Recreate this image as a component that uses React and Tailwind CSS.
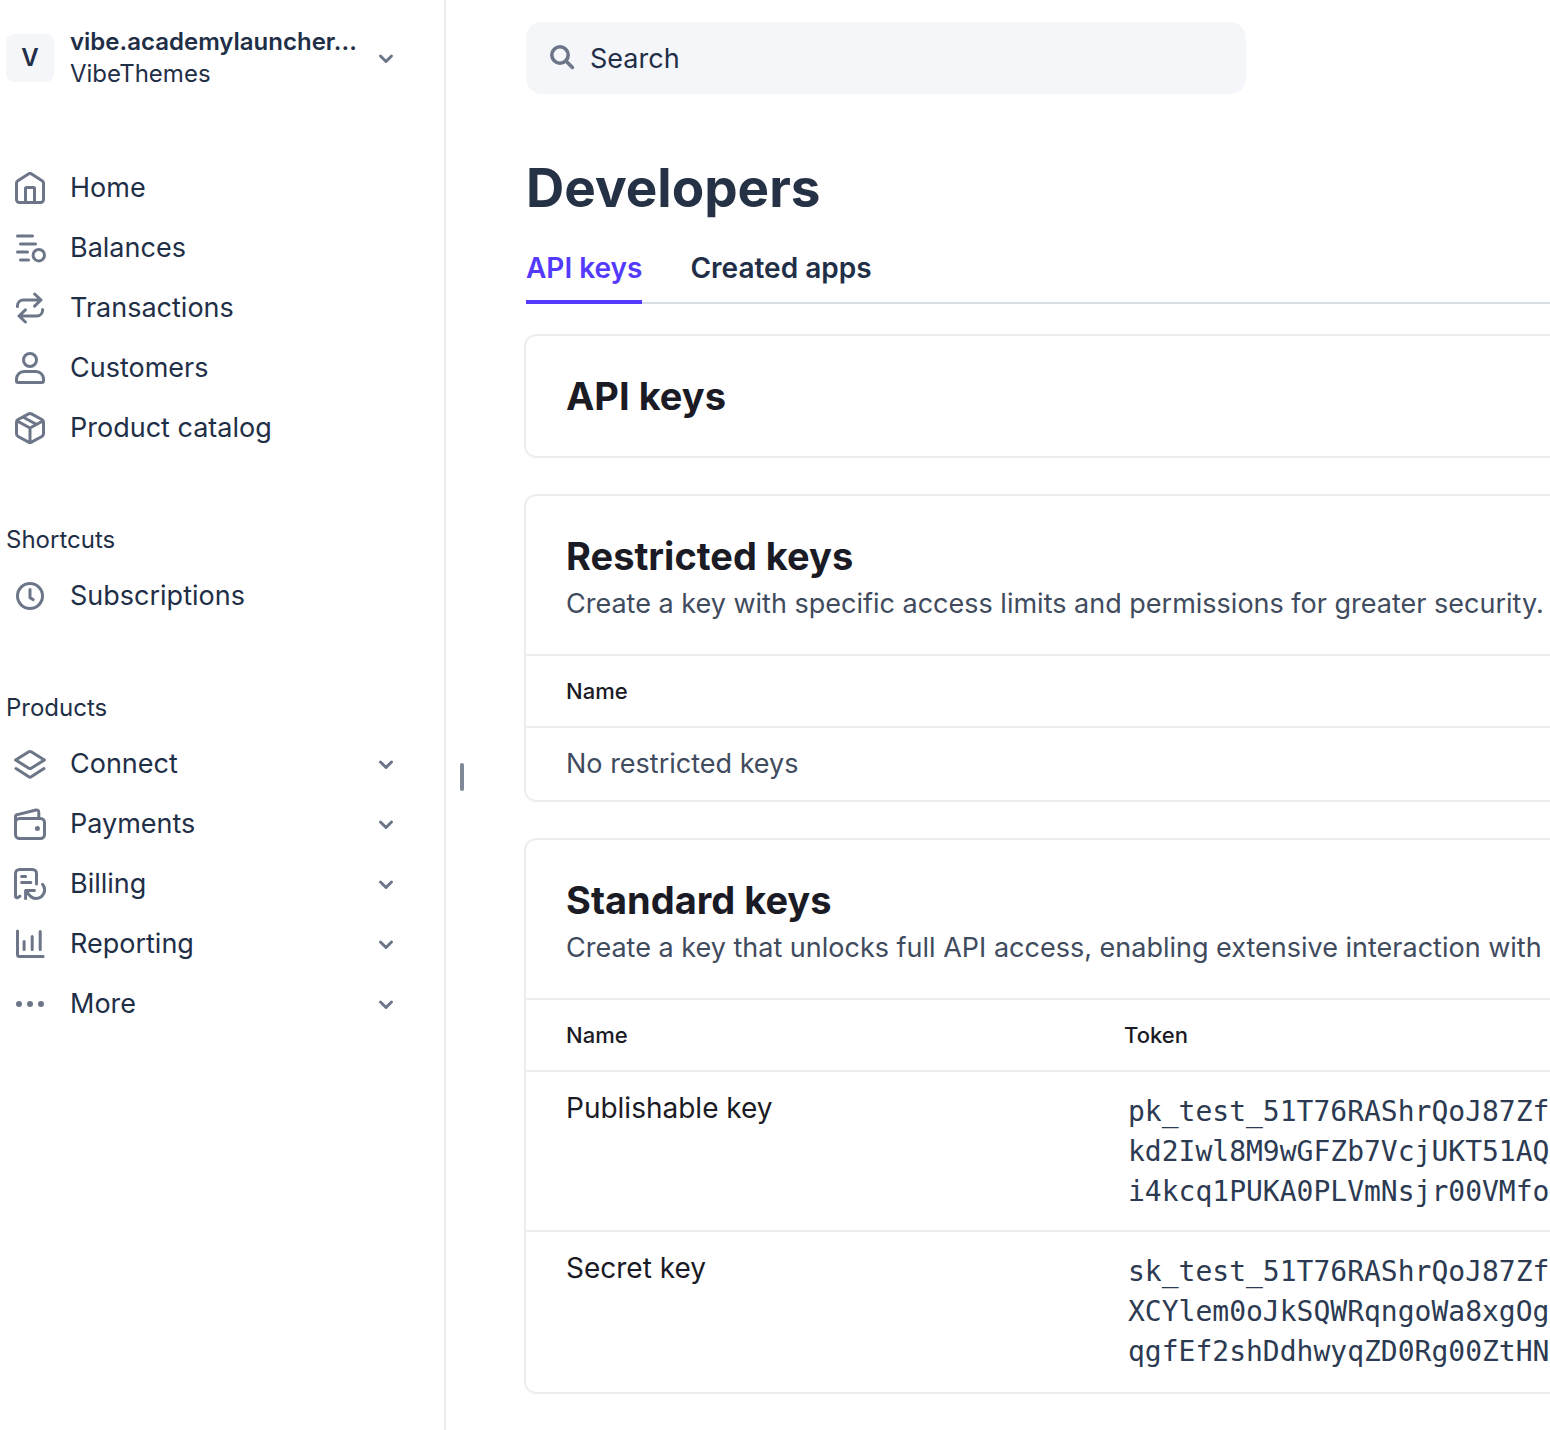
import React, { useState } from "react";

const icons = {
  home: (
    <>
      <path d="M1.25 5.6c0-.5.26-1 .7-1.27L7.2.98a1.5 1.5 0 0 1 1.6 0l5.25 3.35c.44.27.7.76.7 1.27v8.15c0 .83-.67 1.5-1.5 1.5H2.75c-.83 0-1.5-.67-1.5-1.5z" />
      <path d="M5.75 15V8.25c0-.28.22-.5.5-.5h3.5c.28 0 .5.22.5.5V15" />
    </>
  ),
  balances: (
    <>
      <path d="M1.75 2h7.5M3.25 6h7.5M1.75 10h5M3.25 14h4" />
      <circle cx="12.4" cy="11.6" r="2.85" />
    </>
  ),
  transactions: (
    <>
      <path d="M1.7 7.2V7c0-1.7 1.3-3 3-3h8.6M10.3 1l3.2 3-3.2 3.1" />
      <path d="M14.3 8.8V9c0 1.7-1.3 3-3 3H2.7M5.7 15l-3.2-3 3.2-3.1" />
    </>
  ),
  customers: (
    <>
      <circle cx="8" cy="4" r="3.25" />
      <path d="M5 9.75h6c2.1 0 3.75 1.7 3.75 3.8v.95c0 .4-.35.75-.75.75H2a.75.75 0 0 1-.75-.75v-.95c0-2.1 1.65-3.8 3.75-3.8z" />
    </>
  ),
  catalog: (
    <>
      <path d="M7.3.95a1.5 1.5 0 0 1 1.4 0l5.25 2.8c.5.26.8.77.8 1.32v5.86c0 .55-.3 1.06-.8 1.32l-5.25 2.8a1.5 1.5 0 0 1-1.4 0l-5.25-2.8c-.5-.26-.8-.77-.8-1.32V5.07c0-.55.3-1.06.8-1.32z" />
      <path d="M1.6 4.5 8 8l6.4-3.5M8 8v7M4.7 2.6l6.4 3.5" />
    </>
  ),
  clock: (
    <>
      <circle cx="8" cy="8" r="6.25" />
      <path d="M8 4.75V8.9l1.6.9" />
    </>
  ),
  connect: (
    <>
      <path d="M7.4 1.9a1.2 1.2 0 0 1 1.2 0L15.2 6l-6.6 4.1a1.2 1.2 0 0 1-1.2 0L.8 6z" />
      <path d="m1 10.3 6.4 4.1c.37.22.83.22 1.2 0l6.4-4.1" />
    </>
  ),
  payments: (
    <>
      <rect x=".75" y="5.25" width="14.5" height="10" rx="2" />
      <path d="M.75 7V4.5c0-.6.4-1.1 1-1.2L11 1c.7-.15 1.4.3 1.4 1.1V5" />
      <circle cx="11.7" cy="10.2" r="1.25" fill="currentColor" stroke="none" />
    </>
  ),
  billing: (
    <>
      <path d="M11.25 8V2.75c0-1.1-.9-2-2-2h-6.5c-1.1 0-2 .9-2 2V14.1c0 .6.6 1 1.1.7l1.1-.7" />
      <path d="M3.8 4.2h2M3.8 7.3h4.6" />
      <path d="M14.3 8.2a4.3 4.3 0 0 1-3.4 7c-2 0-3.4-1.4-4.6-3.6M10.2 11.2H5.8v4.1" />
    </>
  ),
  reporting: (
    <path d="M1.75 1.5v11.8c0 .55.45 1 1 1h11.8M5.05 6.7v4M9.1 4.2v6.5M13.1 1.7v9" />
  ),
  more: (
    <g fill="currentColor" stroke="none">
      <circle cx="2.5" cy="8" r="1.5" />
      <circle cx="8" cy="8" r="1.5" />
      <circle cx="13.5" cy="8" r="1.5" />
    </g>
  ),
};

const mainLinks = [
  { label: "Home", icon: "home" },
  { label: "Balances", icon: "balances" },
  { label: "Transactions", icon: "transactions" },
  { label: "Customers", icon: "customers" },
  { label: "Product catalog", icon: "catalog" },
];

const products = [
  { label: "Connect", icon: "connect" },
  { label: "Payments", icon: "payments" },
  { label: "Billing", icon: "billing" },
  { label: "Reporting", icon: "reporting" },
  { label: "More", icon: "more" },
];

const standardKeys = [
  {
    name: "Publishable key",
    token: ["pk_test_51T76RAShrQoJ87Zf", "kd2Iwl8M9wGFZb7VcjUKT51AQ", "i4kcq1PUKA0PLVmNsjr00VMfoM"],
  },
  {
    name: "Secret key",
    token: ["sk_test_51T76RAShrQoJ87Zf", "XCYlem0oJkSQWRqngoWa8xgOg", "qgfEf2shDdhwyqZD0Rg00ZtHN"],
  },
];

function Icon({ name }) {
  return (
    <svg
      viewBox="0 0 16 16"
      className="size-8 shrink-0 text-[#6c7688]"
      fill="none"
      stroke="currentColor"
      strokeWidth="1.5"
      strokeLinecap="round"
      strokeLinejoin="round"
      aria-hidden="true"
    >
      {icons[name]}
    </svg>
  );
}

function Chevron() {
  return (
    <svg
      viewBox="0 0 16 16"
      className="size-4 shrink-0 text-[#6c7688]"
      fill="none"
      stroke="currentColor"
      strokeWidth="3"
      strokeLinecap="round"
      strokeLinejoin="round"
      aria-hidden="true"
    >
      <path d="M2.5 6 8 11.5 13.5 6" />
    </svg>
  );
}

function NavLink({ item }) {
  return (
    <li>
      <a href="#" className="flex h-15 items-center gap-6 pl-2">
        <Icon name={item.icon} />
        {item.label}
      </a>
    </li>
  );
}

function NavGroup({ item }) {
  return (
    <li>
      <button type="button" className="flex h-15 w-full items-center gap-6 pl-2 text-left">
        <Icon name={item.icon} />
        <span className="flex-1">{item.label}</span>
        <Chevron />
      </button>
    </li>
  );
}

function SectionLabel({ children }) {
  return <h2 className="mt-16 pb-2 text-2xl leading-9">{children}</h2>;
}

function Card({ title, description, children }) {
  return (
    <section className="overflow-hidden rounded-l-xl border-2 border-r-0 border-[#ebeef1] text-[#1a1b25]">
      <div className={description ? "border-b-2 border-[#ebeef1] px-10 pt-9 pb-[30px]" : "px-10 py-9"}>
        <h2 className="text-[38px] leading-12 font-bold">{title}</h2>
        {description && (
          <p className="mt-1 text-[27px] leading-10 whitespace-nowrap text-[#414b5e]">{description}</p>
        )}
      </div>
      {children}
    </section>
  );
}

export default function App() {
  const [tab, setTab] = useState("API keys");
  const [query, setQuery] = useState("");

  return (
    <div className="flex min-h-screen overflow-hidden bg-white font-['Inter',sans-serif] text-[27px] text-[#1f2f47]">
      <aside className="w-[446px] shrink-0 border-r-2 border-[#ebeef1] pr-[50px] pl-1.5">
        <button type="button" className="flex h-[116px] w-full items-center gap-4 text-left">
          <span className="flex size-12 shrink-0 items-center justify-center rounded-lg bg-[#f5f6fa] text-2xl font-semibold">
            V
          </span>
          <span className="min-w-0 flex-1 text-2xl leading-8">
            <span className="block font-semibold">vibe.academylauncher...</span>
            <span className="block">VibeThemes</span>
          </span>
          <Chevron />
        </button>
        <nav>
          <ul className="mt-[42px]">
            {mainLinks.map((item) => (
              <NavLink key={item.label} item={item} />
            ))}
          </ul>
          <SectionLabel>Shortcuts</SectionLabel>
          <ul>
            <NavLink item={{ label: "Subscriptions", icon: "clock" }} />
          </ul>
          <SectionLabel>Products</SectionLabel>
          <ul>
            {products.map((item) => (
              <NavGroup key={item.label} item={item} />
            ))}
          </ul>
        </nav>
      </aside>

      {/* resize handle */}
      <div className="flex w-[78px] shrink-0 pt-[763px] pl-3.5">
        <div className="h-7 w-1 rounded-full bg-[#7f8896]" />
      </div>

      <main className="min-w-0 flex-1 pt-[22px] pb-9">
        <div className="pl-0.5">
          <label className="flex h-18 w-full max-w-[720px] items-center gap-4 rounded-2xl bg-[#f5f6fa] px-6">
            <svg
              viewBox="0 0 24 24"
              className="size-6 shrink-0 overflow-visible text-[#6c7688]"
              fill="none"
              stroke="currentColor"
              strokeWidth="3.6"
              strokeLinecap="round"
              aria-hidden="true"
            >
              <circle cx="10" cy="9" r="8.2" />
              <path d="m16.2 15.2 6.2 6.2" />
            </svg>
            <input
              type="text"
              value={query}
              onChange={(e) => setQuery(e.target.value)}
              placeholder="Search"
              aria-label="Search"
              className="w-full bg-transparent pt-0.5 outline-none placeholder:text-[#1f2f47]"
            />
          </label>

          <h1 className="mt-[62px] text-[53px] leading-16 font-bold text-[#253145]">Developers</h1>

          <div className="mt-7 flex gap-12 border-b-2 border-[#d8dee4] text-[28px]" role="tablist">
            {["API keys", "Created apps"].map((name) => (
              <button
                key={name}
                type="button"
                role="tab"
                aria-selected={tab === name}
                onClick={() => setTab(name)}
                className={
                  tab === name
                    ? "-mb-0.5 border-b-4 border-[#533afd] pb-3 leading-10 font-semibold text-[#533afd]"
                    : "-mb-0.5 border-b-4 border-transparent pb-3 leading-10 font-semibold"
                }
              >
                {name}
              </button>
            ))}
          </div>
        </div>

        <div className="mt-[30px] flex flex-col gap-9">
          <Card title="API keys" />

          <Card
            title="Restricted keys"
            description="Create a key with specific access limits and permissions for greater security."
          >
            <table className="w-full border-separate border-spacing-0 text-left">
              <thead>
                <tr>
                  <th className="h-18 border-b-2 border-[#ebeef1] px-10 text-[22px] font-medium">Name</th>
                </tr>
              </thead>
              <tbody>
                <tr>
                  <td className="px-10 py-4 leading-10 text-[#414b5e]">No restricted keys</td>
                </tr>
              </tbody>
            </table>
          </Card>

          <Card
            title="Standard keys"
            description="Create a key that unlocks full API access, enabling extensive interaction with"
          >
            <table className="w-full table-fixed border-separate border-spacing-0 text-left">
              <thead>
                <tr className="text-[22px]">
                  <th className="h-18 w-[598px] border-b-2 border-[#ebeef1] pl-10 font-medium">Name</th>
                  <th className="h-18 border-b-2 border-[#ebeef1] font-medium">Token</th>
                </tr>
              </thead>
              <tbody className="[&>tr:not(:last-child)>td]:border-b-2 [&>tr:not(:last-child)>td]:pb-3.5">
                {standardKeys.map((key) => (
                  <tr key={key.name} className="align-top leading-10">
                    <td className="border-[#ebeef1] py-4 pl-10 text-[28px]">{key.name}</td>
                    <td className="border-[#ebeef1] py-4">
                      <code className="block p-1 font-['DejaVu_Sans_Mono',monospace] text-[28px] leading-10 text-[#2c3a52]">
                        {key.token.map((line) => (
                          <span key={line} className="block whitespace-nowrap">
                            {line}
                          </span>
                        ))}
                      </code>
                    </td>
                  </tr>
                ))}
              </tbody>
            </table>
          </Card>
        </div>
      </main>
    </div>
  );
}
